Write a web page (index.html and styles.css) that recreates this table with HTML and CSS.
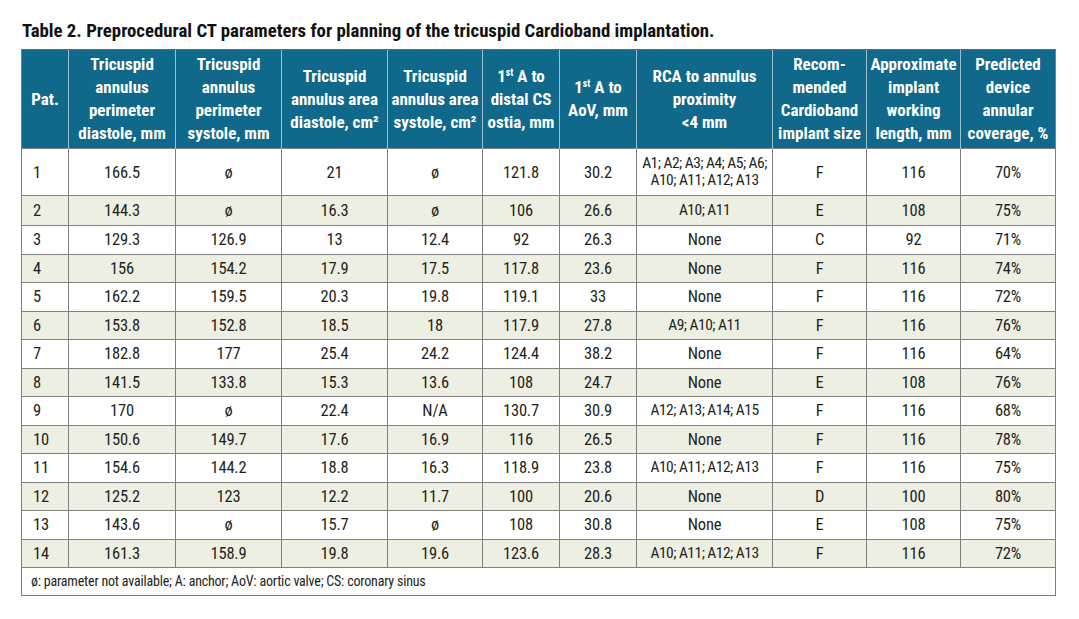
FILE: index.html
```html
<!DOCTYPE html>
<html>
<head>
<meta charset="utf-8">
<link rel="stylesheet" href="styles.css">
</head>
<body>
<div class="page">
  <h1 class="title">Table 2. Preprocedural CT parameters for planning of the tricuspid Cardioband implantation.</h1>
  <table class="data">
    <colgroup>
      <col style="width:47px"><col style="width:107px"><col style="width:106px"><col style="width:106px"><col style="width:95px"><col style="width:77px"><col style="width:77px"><col style="width:136px"><col style="width:94px"><col style="width:94px"><col style="width:95px">
    </colgroup>
    <thead>
      <tr>
        <th class="first">Pat.</th>
        <th>Tricuspid<br>annulus<br>perimeter<br>diastole, mm</th>
        <th>Tricuspid<br>annulus<br>perimeter<br>systole, mm</th>
        <th>Tricuspid<br>annulus area<br>diastole, cm²</th>
        <th>Tricuspid<br>annulus area<br>systole, cm²</th>
        <th>1<sup>st</sup> A to<br>distal CS<br>ostia, mm</th>
        <th>1<sup>st</sup> A to<br>AoV, mm</th>
        <th>RCA to annulus<br>proximity<br>&lt;4 mm</th>
        <th>Recom-<br>mended<br>Cardioband<br>implant size</th>
        <th>Approximate<br>implant<br>working<br>length, mm</th>
        <th>Predicted<br>device<br>annular<br>coverage, %</th>
      </tr>
    </thead>
    <tbody>
      <tr class="tall"><td class="first">1</td><td>166.5</td><td>ø</td><td>21</td><td>ø</td><td>121.8</td><td>30.2</td><td class="rca">A1; A2; A3; A4; A5; A6;<br>A10; A11; A12; A13</td><td>F</td><td>116</td><td>70%</td></tr>
      <tr class="alt r2"><td class="first">2</td><td>144.3</td><td>ø</td><td>16.3</td><td>ø</td><td>106</td><td>26.6</td><td class="rca">A10; A11</td><td>E</td><td>108</td><td>75%</td></tr>
      <tr><td class="first">3</td><td>129.3</td><td>126.9</td><td>13</td><td>12.4</td><td>92</td><td>26.3</td><td>None</td><td>C</td><td>92</td><td>71%</td></tr>
      <tr class="alt"><td class="first">4</td><td>156</td><td>154.2</td><td>17.9</td><td>17.5</td><td>117.8</td><td>23.6</td><td>None</td><td>F</td><td>116</td><td>74%</td></tr>
      <tr><td class="first">5</td><td>162.2</td><td>159.5</td><td>20.3</td><td>19.8</td><td>119.1</td><td>33</td><td>None</td><td>F</td><td>116</td><td>72%</td></tr>
      <tr class="alt"><td class="first">6</td><td>153.8</td><td>152.8</td><td>18.5</td><td>18</td><td>117.9</td><td>27.8</td><td class="rca">A9; A10; A11</td><td>F</td><td>116</td><td>76%</td></tr>
      <tr><td class="first">7</td><td>182.8</td><td>177</td><td>25.4</td><td>24.2</td><td>124.4</td><td>38.2</td><td>None</td><td>F</td><td>116</td><td>64%</td></tr>
      <tr class="alt"><td class="first">8</td><td>141.5</td><td>133.8</td><td>15.3</td><td>13.6</td><td>108</td><td>24.7</td><td>None</td><td>E</td><td>108</td><td>76%</td></tr>
      <tr><td class="first">9</td><td>170</td><td>ø</td><td>22.4</td><td>N/A</td><td>130.7</td><td>30.9</td><td class="rca">A12; A13; A14; A15</td><td>F</td><td>116</td><td>68%</td></tr>
      <tr class="alt"><td class="first">10</td><td>150.6</td><td>149.7</td><td>17.6</td><td>16.9</td><td>116</td><td>26.5</td><td>None</td><td>F</td><td>116</td><td>78%</td></tr>
      <tr><td class="first">11</td><td>154.6</td><td>144.2</td><td>18.8</td><td>16.3</td><td>118.9</td><td>23.8</td><td class="rca">A10; A11; A12; A13</td><td>F</td><td>116</td><td>75%</td></tr>
      <tr class="alt"><td class="first">12</td><td>125.2</td><td>123</td><td>12.2</td><td>11.7</td><td>100</td><td>20.6</td><td>None</td><td>D</td><td>100</td><td>80%</td></tr>
      <tr><td class="first">13</td><td>143.6</td><td>ø</td><td>15.7</td><td>ø</td><td>108</td><td>30.8</td><td>None</td><td>E</td><td>108</td><td>75%</td></tr>
      <tr class="alt"><td class="first">14</td><td>161.3</td><td>158.9</td><td>19.8</td><td>19.6</td><td>123.6</td><td>28.3</td><td class="rca">A10; A11; A12; A13</td><td>F</td><td>116</td><td>72%</td></tr>
    </tbody>
    <tfoot>
      <tr><td colspan="11" class="note">ø: parameter not available; A: anchor; AoV: aortic valve; CS: coronary sinus</td></tr>
    </tfoot>
  </table>
</div>
</body>
</html>
```
FILE: styles.css
```css
html, body {
  margin: 0;
  padding: 0;
  background: #ffffff;
}
.page {
  padding: 21px 0 0 21px;
  font-family: "Roboto Condensed", "Roboto", sans-serif;
  font-stretch: 75%;
  color: #231f20;
}
.title {
  margin: 0 0 7px 1px;
  font-size: 18.8px;
  line-height: 21px;
  font-weight: bold;
  color: #111;
}
.data {
  border-collapse: collapse;
  table-layout: fixed;
  width: 1034px;
  border: 1px solid #808080;
}
.data th {
  background: #10698a;
  color: #ffffff;
  font-weight: bold;
  font-size: 17px;
  line-height: 23px;
  height: 99px;
  padding: 0 1px;
  text-align: center;
  vertical-align: middle;
  border-left: 1px solid #9cc2d0;
  border-top: 1px solid #6a6a6a;
  box-sizing: border-box;
  white-space: nowrap;
}
.data th:first-child { border-left: 1px solid #808080; }
.data th sup {
  font-size: 10px;
  line-height: 0;
  vertical-align: 6px;
}
.data td {
  font-size: 16.5px;
  line-height: 17px;
  height: 27.5px;
  padding: 0 2px;
  text-align: center;
  vertical-align: middle;
  border: 1px solid #808080;
  color: #231f20;
  letter-spacing: -0.2px;
}
.data td.first {
  text-align: left;
  padding-left: 11px;
}
.data tr.tall td { height: 46px; }
.data tr.r2 td { height: 29px; }
.data tr.alt td { background: #eeefe3; }
.data td.rca {
  font-size: 15.5px;
  letter-spacing: -0.5px;
  white-space: nowrap;
}
.data td.note {
  text-align: left;
  padding-left: 9px;
  font-size: 14px;
  letter-spacing: -0.2px;
  height: 27px;
}
```
